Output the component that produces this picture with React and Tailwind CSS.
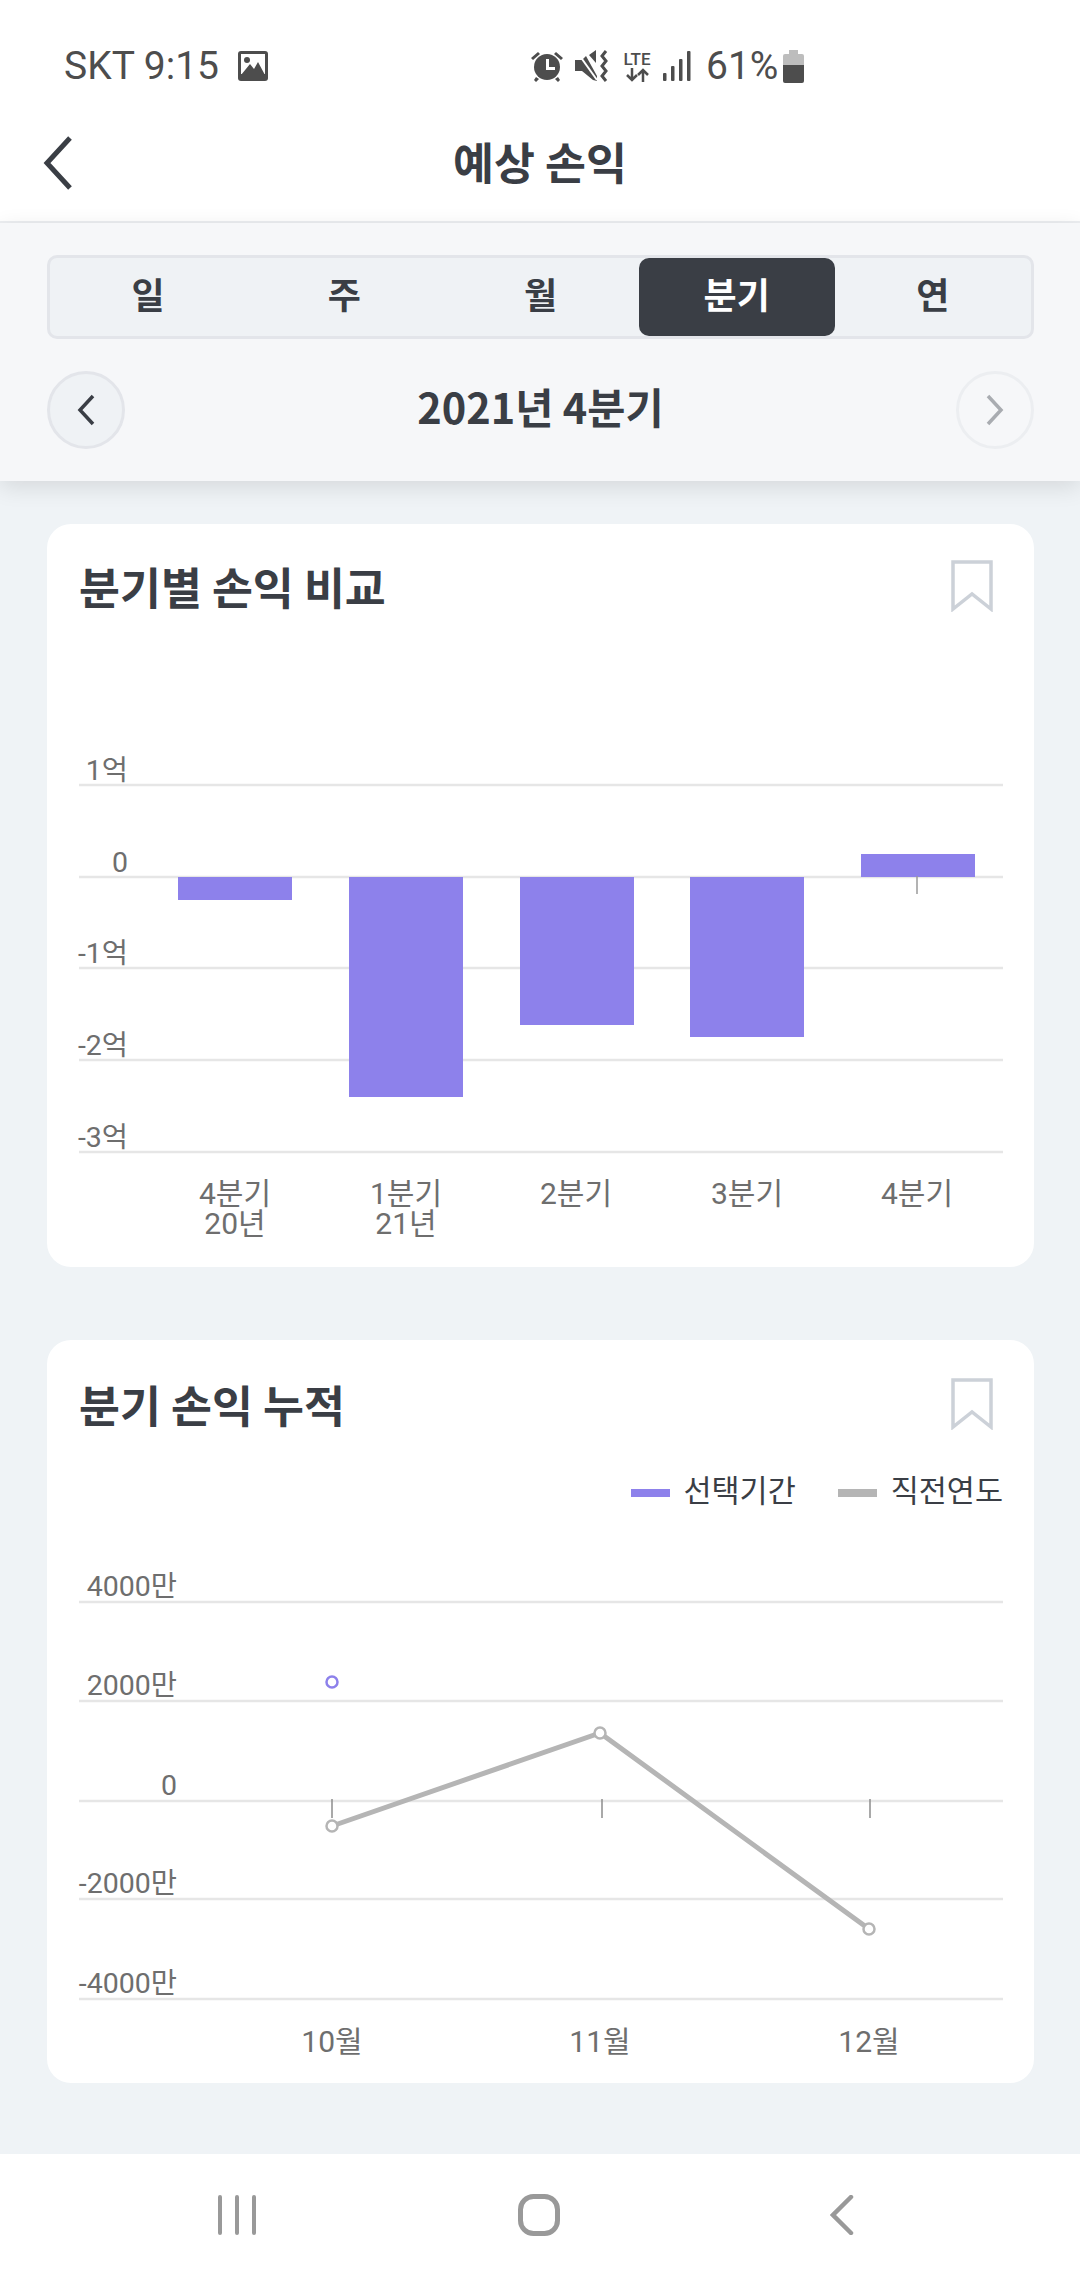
const tabs = ["일", "주", "월", "분기", "연"];

const quarterBars = [
  { x: 178, y: 877, h: 23 },
  { x: 349, y: 877, h: 220 },
  { x: 520, y: 877, h: 148 },
  { x: 690, y: 877, h: 160 },
  { x: 861, y: 854, h: 23 },
];

const quarterLabels = [
  { x: 235, lines: ["4분기", "20년"] },
  { x: 406, lines: ["1분기", "21년"] },
  { x: 576, lines: ["2분기"] },
  { x: 747, lines: ["3분기"] },
  { x: 917, lines: ["4분기"] },
];

function Bookmark() {
  return (
    <svg width="42" height="52" viewBox="0 0 42 52" fill="none" stroke="#ccd1d8" strokeWidth="3.5">
      <path d="M2 2H40V49L21 34L2 49Z" />
    </svg>
  );
}

function StatusBar() {
  return (
    <div className="h-[100px] flex items-center pl-[64px] pt-[32px] text-[39px] text-[#4d4d4d]">
      <span className="w-[174px] whitespace-nowrap">SKT 9:15</span>
      <svg width="30" height="30" viewBox="0 0 30 30">
        <rect width="30" height="30" rx="3" fill="#4d4d4d" />
        <rect x="3" y="3" width="24" height="20" fill="#fff" />
        <circle cx="9" cy="9" r="3" fill="#4d4d4d" />
        <path d="M3 24L12 13L16 18L20 11L27 24Z" fill="#4d4d4d" />
      </svg>
      <div className="ml-[262px] flex items-center">
        <svg width="34" height="32" viewBox="0 0 34 32" fill="#4d4d4d">
          <circle cx="17" cy="17" r="13" />
          <path d="M16 9h3v8h6v3h-9z" fill="#fff" />
          <path d="M1 8L8 2l2 2-7 6zM33 8l-7-6-2 2 7 6zM6 27l3 2-3 3-2-2zM28 27l-3 2 3 3 2-2z" />
        </svg>
        <svg className="ml-[11px]" width="36" height="32" viewBox="0 0 36 32" fill="#4d4d4d">
          <path d="M0 10h7l4-4 11 20v5l-4-1-11-9H0zM14 5l7-5v13z" />
          <path d="M2 2l20 28" stroke="#fff" strokeWidth="2" />
          <path d="M31 1l-4 5 4 5-4 5 4 5-4 5 4 5" fill="none" stroke="#4d4d4d" strokeWidth="3" />
        </svg>
        <div className="ml-[10px] w-[32px] flex flex-col items-center">
          <span className="text-[17px] leading-[17px] font-medium">LTE</span>
          <svg width="26" height="14" viewBox="0 0 26 14" fill="none" stroke="#4d4d4d" strokeWidth="2.5">
            <path d="M8 0v12M3 7l5 5 5-5M19 14V2M14 7l5-5 5 5" />
          </svg>
        </div>
        <svg className="ml-[10px]" width="28" height="30" viewBox="0 0 28 30" fill="#4d4d4d">
          <rect x="0" y="22" width="3.5" height="8" rx="1" />
          <rect x="8" y="15" width="3.5" height="15" rx="1" />
          <rect x="16" y="8" width="3.5" height="22" rx="1" />
          <rect x="24" y="0" width="3.5" height="30" rx="1" />
        </svg>
        <span className="ml-[15px] w-[77px] whitespace-nowrap">61%</span>
        <svg width="21" height="33" viewBox="0 0 21 33">
          <path d="M6 0h9v4h4a2 2 0 0 1 2 2v9H0V6a2 2 0 0 1 2-2h4z" fill="#bdbdbd" />
          <path d="M0 15h21v16a2 2 0 0 1-2 2H2a2 2 0 0 1-2-2z" fill="#4d4d4d" />
        </svg>
      </div>
    </div>
  );
}

function CardHeader({ title }) {
  return (
    <div className="flex items-start justify-between pr-[10px]">
      <h2 className="-mt-[4px] text-[44.5px] leading-[60px] font-bold text-[#3a3e45] font-['Noto_Sans_CJK_KR',sans-serif]">{title}</h2>
      <Bookmark />
    </div>
  );
}

function QuarterChart() {
  const grid = [
    { y: 785, label: "1억" },
    { y: 877, label: "0" },
    { y: 968, label: "-1억" },
    { y: 1060, label: "-2억" },
    { y: 1152, label: "-3억" },
  ];
  return (
    <svg className="block overflow-visible w-[924px] h-[550px]" viewBox="79 700 924 550">
      {grid.map((g) => (
        <g key={g.y}>
          <line x1="79" x2="1003" y1={g.y} y2={g.y} stroke="#e6e6e6" strokeWidth="2.5" />
          <text x="128" y={g.y - 5} textAnchor="end" fontSize="28.5" fill="#6e6e6e">
            {g.label}
          </text>
        </g>
      ))}
      {quarterBars.map((b) => (
        <rect key={b.x} x={b.x} y={b.y} width="114" height={b.h} fill="#8d81eb" />
      ))}
      <line x1="917" x2="917" y1="876" y2="894" stroke="#9a9a9a" strokeWidth="1.5" />
      {quarterLabels.map((l) =>
        l.lines.map((t, i) => (
          <text key={t} x={l.x} y={1204 + i * 30} textAnchor="middle" fontSize="30" fill="#6e6e6e">
            {t}
          </text>
        ))
      )}
    </svg>
  );
}

function CumulativeChart() {
  const grid = [
    { y: 1602, label: "4000만" },
    { y: 1701, label: "2000만" },
    { y: 1801, label: "0" },
    { y: 1899, label: "-2000만" },
    { y: 1999, label: "-4000만" },
  ];
  const points = [
    [332, 1826],
    [600, 1733],
    [869, 1929],
  ];
  return (
    <svg className="block overflow-visible w-[924px] h-[510px]" viewBox="79 1560 924 510">
      {grid.map((g) => (
        <g key={g.y}>
          <line x1="79" x2="1003" y1={g.y} y2={g.y} stroke="#e6e6e6" strokeWidth="2.5" />
          <text x="177" y={g.y - 6} textAnchor="end" fontSize="28.5" fill="#6e6e6e">
            {g.label}
          </text>
        </g>
      ))}
      {[332, 602, 870].map((x) => (
        <line key={x} x1={x} x2={x} y1="1799" y2="1818" stroke="#8c8c8c" strokeWidth="1.5" />
      ))}
      <polyline
        points={points.map((p) => p.join(",")).join(" ")}
        fill="none"
        stroke="#b5b5b5"
        strokeWidth="5"
      />
      {points.map((p) => (
        <circle key={p[0]} cx={p[0]} cy={p[1]} r="5.5" fill="#fff" stroke="#b5b5b5" strokeWidth="2.5" />
      ))}
      <circle cx="332" cy="1682" r="5.5" fill="#fff" stroke="#8d81eb" strokeWidth="2.5" />
      {[
        [332, "10월"],
        [600, "11월"],
        [869, "12월"],
      ].map(([x, t]) => (
        <text key={t} x={x} y="2052" textAnchor="middle" fontSize="30" fill="#6e6e6e">
          {t}
        </text>
      ))}
    </svg>
  );
}

export default function App() {
  return (
    <div className="w-[1080px] h-[2280px] flex flex-col bg-[#eff3f6] font-['Roboto','Noto_Sans_CJK_KR',sans-serif] overflow-hidden">
      <div className="bg-white">
        <StatusBar />
        <div className="relative h-[123px] flex items-center justify-center border-b-2 border-[#eceef1]">
          <svg className="absolute left-[42px] top-[36px]" width="32" height="54" viewBox="0 0 32 54" fill="none" stroke="#3a3e45" strokeWidth="5">
            <path d="M28 2L5 27L28 52" />
          </svg>
          <h1 className="pt-[2px] text-[44.5px] font-bold text-[#3a3e45] font-['Noto_Sans_CJK_KR',sans-serif]">예상 손익</h1>
        </div>
      </div>

      <div className="relative z-10 h-[258px] bg-[#f6f7f9] pl-[47px] pr-[46px] pt-[32px] shadow-[0_6px_22px_rgba(0,0,0,0.11)]">
        <div className="h-[84px] grid grid-cols-5 border-[3px] border-[#e3e5ea] rounded-[10px] bg-[#eff2f5]">
          {tabs.map((t) => (
            <div
              key={t}
              className={
                t === "분기"
                  ? "flex items-center justify-center rounded-[10px] bg-[#3a3e45] text-white text-[36px] font-bold"
                  : "flex items-center justify-center text-[#3a3e45] text-[36px] font-bold"
              }
            >
              {t}
            </div>
          ))}
        </div>
        <div className="mt-[32px] flex items-center justify-between">
          <button className="w-[78px] h-[78px] rounded-full border-[3px] border-[#e3e5ea] bg-[#eff2f5] flex items-center justify-center">
            <svg width="18" height="32" viewBox="0 0 18 32" fill="none" stroke="#3a3e45" strokeWidth="3.5">
              <path d="M16 2L3 16L16 30" />
            </svg>
          </button>
          <span className="-mt-[8px] text-[41.5px] font-bold text-[#3a3e45] font-['Noto_Sans_CJK_KR',sans-serif]">2021년 4분기</span>
          <button className="w-[78px] h-[78px] rounded-full border-[3px] border-[#eceef1] flex items-center justify-center">
            <svg width="18" height="32" viewBox="0 0 18 32" fill="none" stroke="#a9acb1" strokeWidth="3.5">
              <path d="M2 2L15 16L2 30" />
            </svg>
          </button>
        </div>
      </div>

      <div className="flex-1 pl-[47px] pr-[46px] pt-[43px]">
        <section className="h-[743px] bg-white rounded-[24px] pl-[32px] pr-[31px] pt-[36px]">
          <div className="h-[140px]">
            <CardHeader title="분기별 손익 비교" />
          </div>
          <QuarterChart />
        </section>

        <section className="mt-[73px] h-[743px] bg-white rounded-[24px] pl-[32px] pr-[31px] pt-[38px]">
          <div className="h-[60px]">
            <CardHeader title="분기 손익 누적" />
          </div>
          <div className="mt-[32px] h-[90px] flex items-start justify-end text-[30.5px] leading-[44px] text-[#3a3e45]">
            <span className="mt-[19px] w-[39px] h-[8px] bg-[#8d81eb]" />
            <span className="ml-[14px]">선택기간</span>
            <span className="ml-[42px] mt-[19px] w-[39px] h-[8px] bg-[#b5b5b5]" />
            <span className="ml-[14px]">직전연도</span>
          </div>
          <CumulativeChart />
        </section>
      </div>

      <div className="h-[126px] bg-white flex items-center relative">
        <svg className="absolute left-[218px] top-[41px]" width="38" height="40" viewBox="0 0 38 40" stroke="#999" strokeWidth="4" strokeLinecap="round">
          <path d="M2 2V38M19 2V38M36 2V38" />
        </svg>
        <svg className="absolute left-[518px] top-[40px]" width="42" height="42" viewBox="0 0 42 42" fill="none" stroke="#999" strokeWidth="5">
          <rect x="2.5" y="2.5" width="37" height="37" rx="13" />
        </svg>
        <svg className="absolute left-[830px] top-[41px]" width="24" height="40" viewBox="0 0 24 40" fill="none" stroke="#999" strokeWidth="4.5" strokeLinecap="round">
          <path d="M21 2L3 20L21 38" />
        </svg>
      </div>
    </div>
  );
}
